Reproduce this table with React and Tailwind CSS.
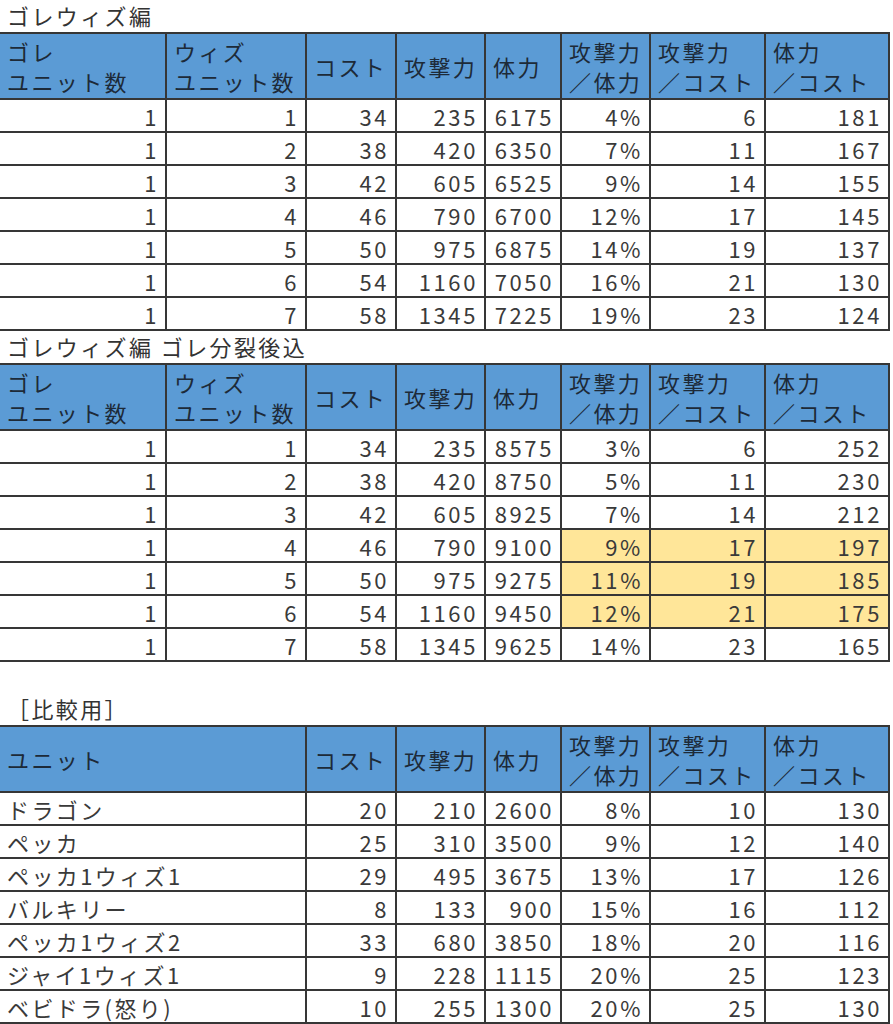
import React from "react";

const widths = [166, 140, 90, 89, 76, 89, 115, 124];

const golemHead = [
  ["ゴレ", "ユニット数"],
  ["ウィズ", "ユニット数"],
  ["コスト"],
  ["攻撃力"],
  ["体力"],
  ["攻撃力", "／体力"],
  ["攻撃力", "／コスト"],
  ["体力", "／コスト"],
];

const table1 = [
  [1, 1, 34, 235, 6175, "4%", 6, 181],
  [1, 2, 38, 420, 6350, "7%", 11, 167],
  [1, 3, 42, 605, 6525, "9%", 14, 155],
  [1, 4, 46, 790, 6700, "12%", 17, 145],
  [1, 5, 50, 975, 6875, "14%", 19, 137],
  [1, 6, 54, 1160, 7050, "16%", 21, 130],
  [1, 7, 58, 1345, 7225, "19%", 23, 124],
];

const table2 = [
  [1, 1, 34, 235, 8575, "3%", 6, 252],
  [1, 2, 38, 420, 8750, "5%", 11, 230],
  [1, 3, 42, 605, 8925, "7%", 14, 212],
  [1, 4, 46, 790, 9100, "9%", 17, 197],
  [1, 5, 50, 975, 9275, "11%", 19, 185],
  [1, 6, 54, 1160, 9450, "12%", 21, 175],
  [1, 7, 58, 1345, 9625, "14%", 23, 165],
];

const table3 = [
  ["ドラゴン", 20, 210, 2600, "8%", 10, 130],
  ["ペッカ", 25, 310, 3500, "9%", 12, 140],
  ["ペッカ1ウィズ1", 29, 495, 3675, "13%", 17, 126],
  ["バルキリー", 8, 133, 900, "15%", 16, 112],
  ["ペッカ1ウィズ2", 33, 680, 3850, "18%", 20, 116],
  ["ジャイ1ウィズ1", 9, 228, 1115, "20%", 25, 123],
  ["ベビドラ(怒り)", 10, 255, 1300, "20%", 25, 130],
];

const cellB = "border-2 border-[#363636] first:border-l-0";

function Title({ children }) {
  return (
    <div className="h-[32px] pl-[7px] leading-[31px] text-[22px] tracking-[2.4px] text-[#333]">{children}</div>
  );
}

function HeadCell({ lines, span }) {
  return (
    <th
      colSpan={span || 1}
      className={`${cellB} bg-[#5b9bd5] h-[66px] pl-[7px] pr-0 text-left align-middle font-normal text-[22px] tracking-[2.4px] leading-[30px] text-[#1d2a38]`}
    >
      {lines.map((l, i) => (
        <div key={i} className="whitespace-nowrap">{l}</div>
      ))}
    </th>
  );
}

function Cell({ v, hl, left, span }) {
  return (
    <td
      colSpan={span || 1}
      className={`${cellB} ${hl ? "bg-[#ffe699]" : "bg-white"} h-[33px] ${left ? "pl-[7px] text-left tracking-[2.4px]" : "pr-[6px] text-right tracking-[2.6px]"} text-[22px] leading-[28px] text-[#3a3a3a] whitespace-nowrap`}
    >
      {v}
    </td>
  );
}

function Cols() {
  return (
    <colgroup>
      {widths.map((w, i) => (
        <col key={i} style={{ width: w }} />
      ))}
    </colgroup>
  );
}

function GolemTable({ rows, highlight }) {
  return (
    <table className="table-fixed border-collapse w-[889px]">
      <Cols />
      <thead>
        <tr>
          {golemHead.map((h, i) => (
            <HeadCell key={i} lines={h} />
          ))}
        </tr>
      </thead>
      <tbody>
        {rows.map((r, ri) => (
          <tr key={ri}>
            {r.map((v, ci) => (
              <Cell key={ci} v={v} hl={highlight && highlight(ri, ci)} />
            ))}
          </tr>
        ))}
      </tbody>
    </table>
  );
}

export default function App() {
  return (
    <div
      className="w-[893px] bg-white"
      style={{ fontFamily: '"Noto Sans CJK JP", "Noto Sans", sans-serif' }}
    >
      <Title>ゴレウィズ編</Title>
      <GolemTable rows={table1} />
      <Title>ゴレウィズ編 ゴレ分裂後込</Title>
      <GolemTable rows={table2} highlight={(r, c) => r >= 3 && r <= 5 && c >= 5} />
      <div className="h-[31px]" />
      <Title>［比較用］</Title>
      <table className="table-fixed border-collapse w-[889px]">
        <Cols />
        <thead>
          <tr>
            <HeadCell lines={["ユニット"]} span={2} />
            {golemHead.slice(2).map((h, i) => (
              <HeadCell key={i} lines={h} />
            ))}
          </tr>
        </thead>
        <tbody>
          {table3.map((r, ri) => (
            <tr key={ri}>
              <Cell v={r[0]} left span={2} />
              {r.slice(1).map((v, ci) => (
                <Cell key={ci} v={v} />
              ))}
            </tr>
          ))}
        </tbody>
      </table>
    </div>
  );
}
